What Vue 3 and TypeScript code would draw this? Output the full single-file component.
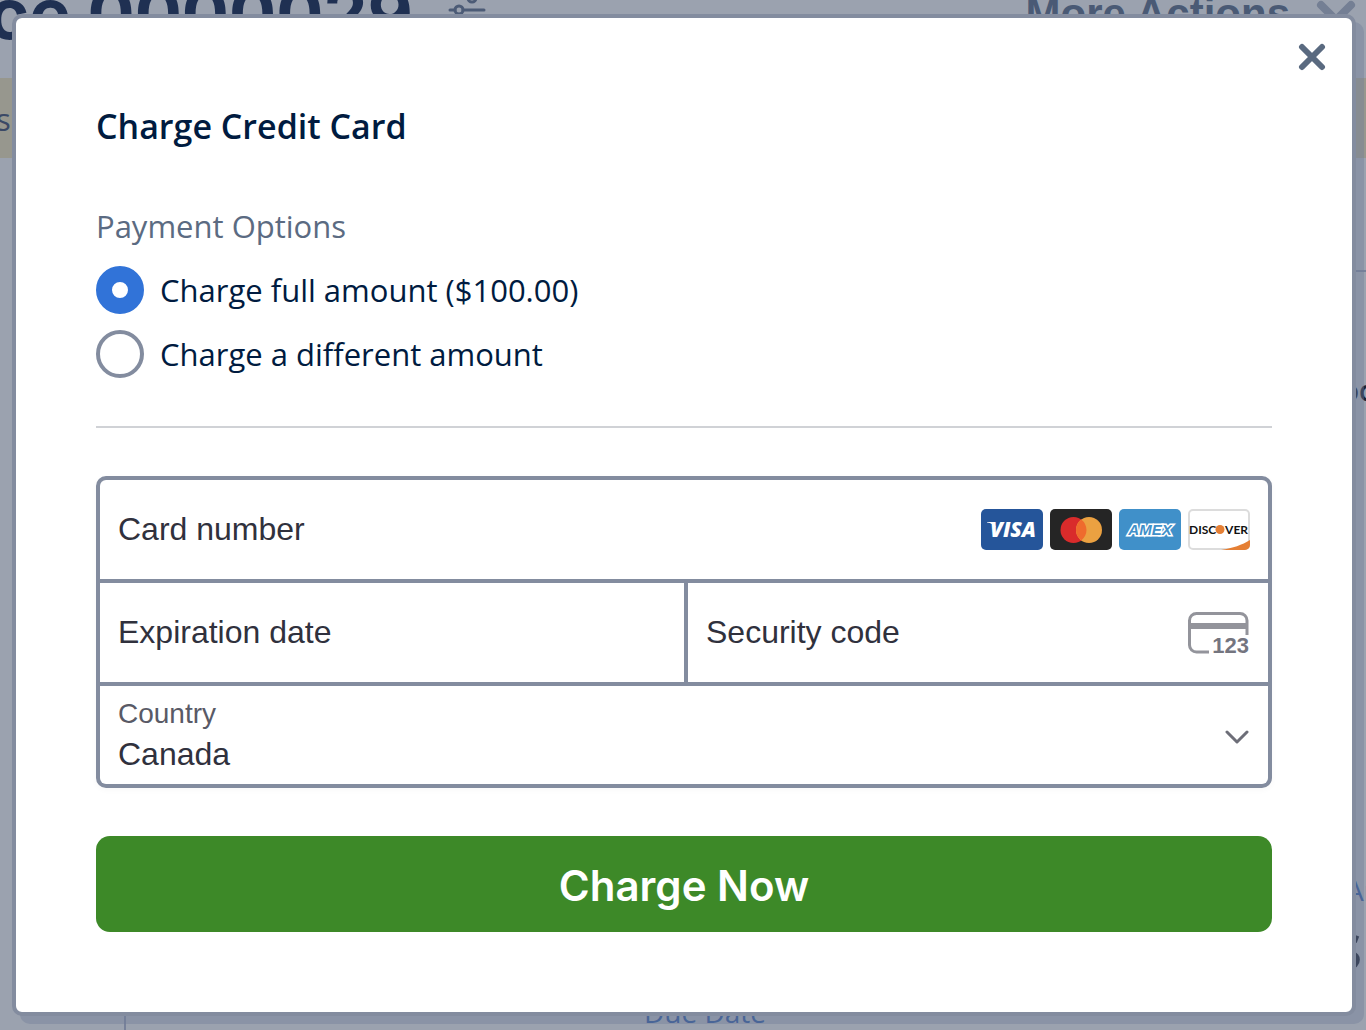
<script setup lang="ts">
import { ref } from 'vue'

type PaymentOption = 'full' | 'partial'

const options: { value: PaymentOption; label: string }[] = [
  { value: 'full', label: 'Charge full amount ($100.00)' },
  { value: 'partial', label: 'Charge a different amount' },
]

const selected = ref<PaymentOption>('full')
const cardNumber = ref('')
const expiry = ref('')
const code = ref('')
const country = ref('CA')
</script>

<template>
  <div class="screen">
    <div class="page" aria-hidden="true">
      <div class="page-header">
        <div class="page-title">ce 0000029</div>
        <svg class="filter-icon" width="40" height="30" viewBox="0 0 40 30" fill="none" stroke="#4c5b76" stroke-width="3" stroke-linecap="round">
          <path d="M2 8H19M29 8H36M2 20H7M15 20H36" />
          <circle cx="24" cy="8" r="4" />
          <circle cx="11" cy="20" r="4" />
        </svg>
        <div class="page-actions">More Actions</div>
        <svg class="page-close" width="40" height="40" viewBox="0 0 40 40" fill="none" stroke="#747f94" stroke-width="8" stroke-linecap="round">
          <path d="M5 5L35 35M35 5L5 35" />
        </svg>
      </div>
      <div class="page-banner">s</div>
      <div class="invoice">
        <div class="invoice-side">
          <div class="side-name">oc</div>
          <div class="side-label">Am</div>
          <div class="side-total">$</div>
        </div>
        <div class="due-date">Due Date</div>
      </div>
    </div>

    <form class="modal" role="dialog" aria-labelledby="modal-title" @submit.prevent>
      <button type="button" class="close" aria-label="Close">
        <svg width="28" height="28" viewBox="0 0 28 28" fill="none" stroke="#5a6a80" stroke-width="6" stroke-linecap="round">
          <path d="M4 4L24 24M24 4L4 24" />
        </svg>
      </button>

      <h1 id="modal-title" class="title">Charge Credit Card</h1>

      <fieldset class="options">
        <legend class="legend">Payment Options</legend>
        <label v-for="option in options" :key="option.value" class="option">
          <input v-model="selected" type="radio" name="payment" :value="option.value" />
          <span>{{ option.label }}</span>
        </label>
      </fieldset>

      <hr class="divider" />

      <div class="card-form">
        <div class="cell">
          <input v-model="cardNumber" class="field" type="text" aria-label="Card number" placeholder="Card number" />
          <div class="brands">
            <svg width="62" height="42" viewBox="0 0 62 42" role="img" aria-label="Visa">
              <rect width="62" height="41" rx="5" fill="#25559a" />
              <text class="visa" x="32" y="28" text-anchor="middle">VISA</text>
              <path d="M6 13h7l2 6c-2-3-5-5-9-5.400z" fill="#fff" />
            </svg>
            <svg width="62" height="42" viewBox="0 0 62 42" role="img" aria-label="Mastercard">
              <rect width="62" height="41" rx="5" fill="#252525" />
              <circle cx="23.500" cy="21" r="13" fill="#d92b2b" />
              <circle cx="39" cy="21" r="13" fill="#eba141" />
              <path d="M31.250 10.560a13 13 0 0 1 0 20.880a13 13 0 0 1 0-20.880z" fill="#ef6b2d" />
            </svg>
            <svg width="62" height="42" viewBox="0 0 62 42" role="img" aria-label="American Express">
              <rect width="62" height="41" rx="5" fill="#4090c9" />
              <text class="amex" x="31" y="26" text-anchor="middle">AMEX</text>
            </svg>
            <svg width="62" height="42" viewBox="0 0 62 42" role="img" aria-label="Discover">
              <rect x="1" y="1" width="60" height="39" rx="4" fill="#fff" stroke="#dcdcdc" stroke-width="2" />
              <path d="M33 41C45 39 54 36 62 31V36a5 5 0 0 1-5 5z" fill="#e57f34" />
              <text class="discover" x="1" y="25">DISC</text>
              <circle cx="32" cy="20.500" r="4.500" fill="#e57f34" />
              <text class="discover" x="60" y="25" text-anchor="end">VER</text>
            </svg>
          </div>
        </div>
        <div class="split">
          <div class="cell">
            <input v-model="expiry" class="field" type="text" aria-label="Expiration date" placeholder="Expiration date" />
          </div>
          <div class="cell">
            <input v-model="code" class="field" type="text" aria-label="Security code" placeholder="Security code" />
            <svg class="cvc" width="62" height="44" viewBox="0 0 62 44" aria-hidden="true">
              <path d="M59 24V9.500a7 7 0 0 0-7-7H8.500a7 7 0 0 0-7 7V34a7 7 0 0 0 7 7H21" fill="none" stroke="#93949b" stroke-width="3" />
              <path d="M1.500 15H59" stroke="#93949b" stroke-width="6" />
              <text class="cvc-text" x="61" y="42" text-anchor="end">123</text>
            </svg>
          </div>
        </div>
        <div class="cell country">
          <label for="country" class="country-label">Country</label>
          <select id="country" v-model="country" class="country-select">
            <option value="CA">Canada</option>
            <option value="US">United States</option>
          </select>
          <svg class="chevron" width="24" height="16" viewBox="0 0 24 16" fill="none" stroke="#6d6e78" stroke-width="3" stroke-linecap="round" stroke-linejoin="round">
            <path d="M2 3L12 13L22 3" />
          </svg>
        </div>
      </div>

      <button type="submit" class="submit">Charge Now</button>
    </form>
  </div>
</template>

<style>
body {
  margin: 0;
}
</style>

<style scoped>
.screen {
  position: relative;
  min-height: 100vh;
  box-sizing: border-box;
  padding: 14px 10px 14px 12px;
  overflow: hidden;
  background: #9ba2af;
  font-family: "Open Sans", "Noto Sans", sans-serif;
}

/* Dimmed invoice page behind the dialog */
.page {
  position: absolute;
  inset: 0;
  display: flex;
  flex-direction: column;
  overflow: hidden;
  white-space: nowrap;
}

.page-header {
  display: flex;
  align-items: flex-start;
  height: 78px;
  flex: none;
}

.page-title {
  width: 452px;
  margin: -36px 0 0 -12px;
  font: 700 70px/100px Inter, sans-serif;
  color: #1f3052;
}

.filter-icon {
  margin: -10px auto 0 8px;
}

.page-actions {
  margin: -12px 26px 0 0;
  font: 700 42px/52px "Liberation Sans", Arial, sans-serif;
  color: #4a5a75;
}

.page-close {
  margin: 0 10px 0 0;
}

.page-banner {
  height: 80px;
  flex: none;
  text-indent: -4px;
  font-size: 31px;
  line-height: 82px;
  background: #97978e;
  color: #3b4966;
}

.invoice {
  display: flex;
  flex: 1;
  flex-direction: column;
  justify-content: space-between;
  margin: 112px 0 0 124px;
  border-top: 2px solid #77819a;
  border-left: 2px solid #77819a;
}

.invoice-side {
  align-self: flex-end;
  width: 24px;
  padding-top: 98px;
  color: #1b2337;
}

.side-name {
  font-size: 28px;
  font-weight: 600;
  line-height: 40px;
}

.side-label {
  margin: 460px 0 0 4px;
  font-size: 28px;
  line-height: 40px;
  color: #2f5597;
}

.side-total {
  margin: 4px 0 0 -12px;
  font-size: 56px;
  font-weight: 700;
  line-height: 72px;
}

.due-date {
  margin: 0 0 -2px 518px;
  font-size: 28px;
  line-height: 40px;
  color: #2f5597;
}

.modal {
  position: relative;
  display: flex;
  flex-direction: column;
  padding: 80px;
  border: 4px solid #838c9f;
  border-radius: 10px;
  background: #fff;
  box-shadow: 8px 8px 0 rgba(113, 125, 152, 0.4);
}

.close {
  position: absolute;
  top: 25px;
  right: 26px;
  display: flex;
  padding: 0;
  border: 0;
  background: none;
}

.title {
  margin: 0 0 48px;
  font-size: 34px;
  font-weight: 600;
  line-height: 56px;
  color: #001b40;
}

.options {
  display: flex;
  flex-direction: column;
  gap: 16px;
  margin: 0;
  padding: 0;
  border: 0;
}

.legend {
  margin-bottom: 16px;
  padding: 0;
  font-size: 31px;
  line-height: 48px;
  color: #5b6b82;
}

.option {
  display: flex;
  align-items: center;
  gap: 16px;
  font-size: 31px;
  line-height: 48px;
  color: #001b40;
}

.option input {
  appearance: none;
  box-sizing: border-box;
  width: 48px;
  height: 48px;
  margin: 0;
  border: 4px solid #838c9f;
  border-radius: 50%;
  background: #fff;
}

.option input:checked {
  border: 16px solid #3173d8;
}

.divider {
  width: 100%;
  height: 2px;
  margin: 48px 0;
  border: 0;
  background: #d0d2d6;
}

.card-form {
  display: flex;
  flex-direction: column;
  gap: 4px;
  border: 4px solid #838c9f;
  border-radius: 10px;
  background: #838c9f;
  box-shadow: 0 2px 6px rgba(0, 0, 0, 0.03);
  font-family: "Liberation Sans", Arial, sans-serif;
}

.cell {
  display: flex;
  align-items: center;
  box-sizing: border-box;
  min-width: 0;
  height: 99px;
  padding: 0 18px;
  background: #fff;
}

.card-form > .cell:first-child {
  border-radius: 6px 6px 0 0;
}

.split {
  display: grid;
  grid-template-columns: 50% 1fr;
  gap: 4px;
}

.field {
  flex: 1;
  min-width: 0;
  height: 60px;
  padding: 0;
  border: 0;
  outline: 0;
  background: none;
  font: 32px "Liberation Sans", Arial, sans-serif;
  color: #30313d;
}

.field::placeholder {
  opacity: 1;
  color: #30313d;
}

.brands {
  display: flex;
  gap: 7px;
}

.visa {
  font: italic 800 21px "Open Sans", sans-serif;
  fill: #fff;
}

.amex {
  font: italic 700 15px "Liberation Sans", sans-serif;
  fill: #4090c9;
  stroke: #fff;
  stroke-width: 3px;
  paint-order: stroke;
}

.discover {
  font: 700 12px Lato, sans-serif;
  fill: #111;
}

.cvc-text {
  font: 700 22px "Liberation Sans", Arial, sans-serif;
  fill: #74757f;
}

.country {
  position: relative;
  flex-direction: column;
  align-items: stretch;
  justify-content: center;
  height: 98px;
  padding-bottom: 2px;
  border-radius: 0 0 6px 6px;
}

.country-label {
  font-size: 28px;
  line-height: 40px;
  color: #595a66;
}

.country-select {
  appearance: none;
  height: 40px;
  padding: 0;
  border: 0;
  background: none;
  font: 32px/40px "Liberation Sans", Arial, sans-serif;
  color: #30313d;
}

.chevron {
  position: absolute;
  top: 43px;
  right: 19px;
  pointer-events: none;
}

.submit {
  height: 96px;
  margin-top: 48px;
  padding: 4px 0 0;
  border: 0;
  border-radius: 14px;
  background: #3d8928;
  font: 600 42px/56px Inter, "Open Sans", sans-serif;
  color: #fff;
}
</style>
